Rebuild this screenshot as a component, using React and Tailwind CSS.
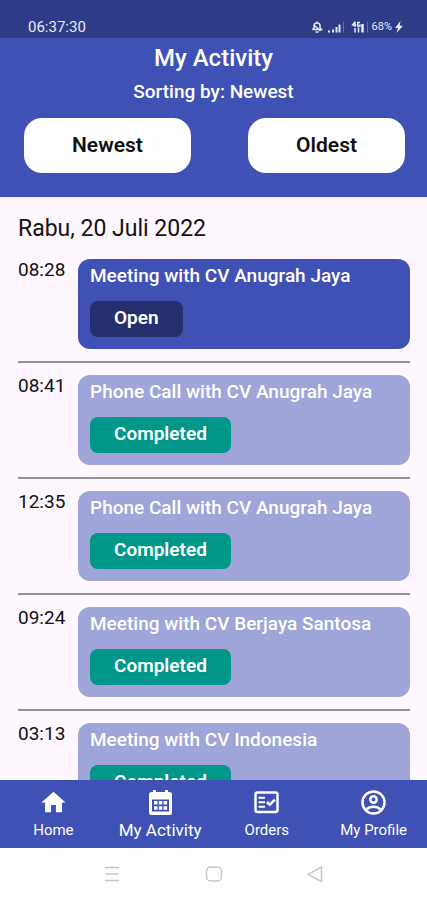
import React, { useState } from 'react';
import { MdHome } from 'react-icons/md';

const activities = [
  { id: 1, time: '08:28', title: 'Meeting with CV Anugrah Jaya', status: 'Open' },
  { id: 2, time: '08:41', title: 'Phone Call with CV Anugrah Jaya', status: 'Completed' },
  { id: 3, time: '12:35', title: 'Phone Call with CV Anugrah Jaya', status: 'Completed' },
  { id: 4, time: '09:24', title: 'Meeting with CV Berjaya Santosa', status: 'Completed' },
  { id: 5, time: '03:13', title: 'Meeting with CV Indonesia', status: 'Completed' }
];

const CalendarIcon = ({ size }) => (
  <svg width={size} height={size} viewBox="0 0 29 29" fill="currentColor">
    <path
      fillRule="evenodd"
      d="M7 2h3v2h9V2h3v2h1.500a2.500 2.500 0 0 1 2.500 2.500v18a2.500 2.500 0 0 1-2.500 2.500h-18A2.500 2.500 0 0 1 3 24.500v-18A2.500 2.500 0 0 1 5.500 4H7zM6 11.500v12h17v-12z"
    />
    <path d="M8 13h3.500v3.500H8zM12.800 13h3.500v3.500h-3.500zM17.600 13h3.500v3.500h-3.500zM8 18.300h3.500v3.500H8zM12.800 18.300h3.500v3.500h-3.500zM17.600 18.300h3.500v3.500h-3.500z" />
  </svg>
);

const OrdersIcon = ({ size }) => (
  <svg width={size} height={size} viewBox="0 0 29 29" fill="none" stroke="currentColor" strokeWidth="2.500">
    <rect x="3.500" y="4.500" width="22" height="19.500" rx="2" />
    <path d="M6.500 9.800H13M6.500 14.300H13M6.500 18.800H13" strokeWidth="2" />
    <path d="m15 14 2.800 2.800 5-5.200" />
  </svg>
);

const ProfileIcon = ({ size }) => (
  <svg width={size} height={size} viewBox="0 0 29 29" fill="none" stroke="currentColor" strokeWidth="2.500">
    <circle cx="14.500" cy="14.500" r="11" />
    <circle cx="14.500" cy="11.500" r="3.200" />
    <path d="M7.500 21.500c3.500-3.600 10.500-3.600 14 0" />
  </svg>
);

const tabs = [
  { label: 'Home', icon: MdHome },
  { label: 'My Activity', icon: CalendarIcon },
  { label: 'Orders', icon: OrdersIcon },
  { label: 'My Profile', icon: ProfileIcon }
];

const StatusBar = () => (
  <div className="h-[38px] shrink-0 bg-[#2e3c87] text-[#e8eafa] pl-7 pr-6 pt-4 flex items-center justify-between">
    <span className="text-[15px] leading-5">06:37:30</span>

    <div className="flex items-center gap-[3px]">
      {/* muted bell */}
      <svg width="12" height="12" viewBox="0 0 12 12" fill="none" stroke="currentColor" strokeWidth="1.5">
        <path d="M1.500 8.500h9L9 7V5a3 3 0 0 0-6 0v2L1.500 8.500M6 2V.5M4.500 11h3M3 4l6.500 6" />
      </svg>
      <svg width="20" height="12" viewBox="0 0 20 12" fill="currentColor">
        <path d="M2 9.500h2v2H2zM6 8.500h2v3H6zM9.500 6h2v5.500h-2zM12.500 3.500h2v8h-2z" />
        <path d="M17 1h1v10.500h-1z" opacity="0.3" />
      </svg>
      <svg width="20" height="12" viewBox="0 0 20 12" fill="none" stroke="currentColor">
        <path d="M6 .8 3.700 4h3.500M6 .8V6M11 1.500H8.800V5H11V3.500M6 7v4.500M9.500 6.500v5" strokeWidth="1.5" />
        <path d="M13.500 3v8.500" strokeWidth="2.500" />
        <path d="M18.500 1v10.500" opacity="0.3" />
      </svg>
      <span className="text-[11px] leading-3">68%</span>
      <svg width="8" height="12" viewBox="0 0 8 12" fill="currentColor">
        <path d="M5.500 0 0 7h3L1.500 12 8 4.700H4.700z" />
      </svg>
    </div>
  </div>
);

const ActivityRow = ({ activity }) => {
  const isOpen = activity.status === 'Open';

  return (
    <li className="flex items-start gap-3 pb-3 mb-3 border-b-2 border-[#959198]">
      <time className="w-12 shrink-0 text-[19px] leading-[22px] text-[#111111]">{activity.time}</time>

      <div
        className={`flex-1 h-[90px] rounded-xl px-3 pt-1 text-white ${
          isOpen ? 'bg-[#3f51b5]' : 'bg-[#9fa4d9]'
        }`}
      >
        <h3 className="text-[19px] leading-[26px] font-medium whitespace-nowrap">{activity.title}</h3>
        <span
          className={`inline-block mt-3 px-6 h-9 rounded-lg text-[19px] leading-[34px] font-semibold ${
            isOpen ? 'bg-[#262f6d]' : 'bg-[#009688]'
          }`}
        >
          {activity.status}
        </span>
      </div>
    </li>
  );
};

const App = () => {
  const [sort, setSort] = useState('Newest');
  const [activeTab, setActiveTab] = useState('My Activity');

  const rows = sort === 'Newest' ? activities : [...activities].reverse();

  return (
    <div className="h-screen flex flex-col overflow-hidden bg-[#fef7ff] font-['Roboto',sans-serif]">
      <StatusBar />

      <header className="shrink-0 bg-[#3f51b5] text-white text-center pt-1 pb-6">
        <h1 className="text-2xl leading-8 font-medium">My Activity</h1>
        <p className="mt-1 text-[19px] leading-7 font-medium">Sorting by: {sort}</p>

        <div className="mt-3 pl-6 pr-[22px] flex justify-between">
          {['Newest', 'Oldest'].map((s) => (
            <button
              key={s}
              type="button"
              onClick={() => setSort(s)}
              className="h-[55px] px-12 rounded-[18px] bg-white text-[#111111] text-[21px] font-semibold"
            >
              {s}
            </button>
          ))}
        </div>
      </header>

      <main className="flex-1 min-h-0 overflow-hidden pl-[18px] pr-[17px] pt-4">
        <h2 className="text-[23px] leading-8 text-[#111111]">Rabu, 20 Juli 2022</h2>
        <ul className="mt-[14px]">
          {rows.map((a) => (
            <ActivityRow key={a.id} activity={a} />
          ))}
        </ul>
      </main>

      <nav className="h-[68px] shrink-0 bg-[#3f51b5] text-white grid grid-cols-4">
        {tabs.map(({ label, icon: Icon }) => (
          <button
            key={label}
            type="button"
            onClick={() => setActiveTab(label)}
            className="flex flex-col items-center pt-2"
          >
            <Icon size={29} />
            <span
              className={`mt-[3px] leading-5 whitespace-nowrap ${
                activeTab === label ? 'text-[17px]' : 'text-[15px]'
              }`}
            >
              {label}
            </span>
          </button>
        ))}
      </nav>

      {/* system navigation */}
      <div className="h-[52px] shrink-0 bg-white text-[#c6c6c6] px-[103px] flex items-center justify-between">
        <button type="button" aria-label="Recent apps">
          <svg width="18" height="18" viewBox="0 0 18 18" stroke="currentColor" strokeWidth="1.5">
            <path d="M2 2.500h14M2 9h14M2 15.500h14" />
          </svg>
        </button>
        <button type="button" aria-label="Home screen">
          <svg width="18" height="18" viewBox="0 0 18 18" fill="none" stroke="currentColor" strokeWidth="1.5">
            <rect x="1.500" y="2" width="15" height="14" rx="4" />
          </svg>
        </button>
        <button type="button" aria-label="Back">
          <svg width="18" height="18" viewBox="0 0 18 18" fill="none" stroke="currentColor" strokeWidth="1.5" strokeLinejoin="round">
            <path d="M15.500 2v14.500L2 9.300z" />
          </svg>
        </button>
      </div>
    </div>
  );
};

export default App;
